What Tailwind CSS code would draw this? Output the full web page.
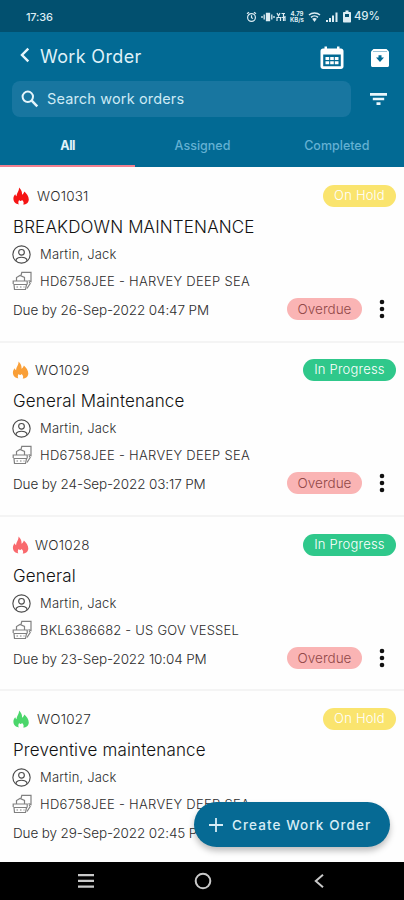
<!DOCTYPE html>
<html lang="en">
<head>
<meta charset="utf-8">
<meta name="viewport" content="width=device-width, initial-scale=1">
<title>Work Order</title>
<script src="https://cdn.jsdelivr.net/npm/@tailwindcss/browser@4"></script>
</head>
<body class="bg-white">
<svg class="hidden">
  <symbol id="flame" viewBox="0 0 16 18"><path fill="currentColor" d="M6 .4C8.400 2.800 9.400 5 9 7.800 10 7.200 10.900 6.200 11.400 4.600 13.600 6.600 15.800 9.500 15.800 12.400 15.800 15.500 13.300 17.300 10.200 17.600 11.200 15.800 10.600 14.400 9 13 8.400 14.200 7 14.400 6.200 13 5.200 14.400 5 16 5.800 17.400 2.500 17 .4 14.800.4 11.600.4 9.800 1.400 8.200 2.300 7.300 2.500 8.300 2.900 9 3.600 9.300 3.600 5.800 6.300 4 6 .4Z"/></symbol>
  <symbol id="user" viewBox="0 0 20 20"><g fill="none" stroke="#4a4a4a" stroke-width="1.200"><circle cx="10" cy="10" r="9.100"/><circle cx="10" cy="7.700" r="3"/><path d="M4.500 16.600V14.800C6.500 12.200 13.500 12.200 15.500 14.800V16.600"/></g></symbol>
  <symbol id="asset" viewBox="0 0 20 20"><g fill="none" stroke="#808080" stroke-width="1.200"><path d="M9 4.500 9.800 1.300H19V10.500L16.500 9.500"/><path d="M4.500 9.500V6.500L8 4.500 12.500 6.500V9.500M1.200 13V10H15.200V13.500M17 10.500 18.200 12.500 15 17.500"/><path d="M2 13.500H14.500L13.500 18.500H2.500Z"/><path d="M4.500 16H6M8 16H9.500M11.500 16H12.500"/></g></symbol>
  <symbol id="dots" viewBox="0 0 6 20"><g fill="#111"><circle cx="3" cy="3" r="2.300"/><circle cx="3" cy="10" r="2.300"/><circle cx="3" cy="17" r="2.300"/></g></symbol>
</svg>
<div class="relative flex h-[900px] w-[404px] flex-col overflow-hidden font-['Inter','Liberation_Sans',sans-serif]">
  <div class="flex h-8 shrink-0 items-center justify-between bg-[#02506f] pr-[25px] pl-[26px] text-[#dcecf3]">
    <span class="pt-[2px] text-[11px] font-medium tracking-[-0.2px]">17:36</span>
    <div class="flex items-center pt-[1px]">
      <svg class="h-3 w-[11px]" viewBox="0 0 11 12" fill="none" stroke="currentColor" stroke-width="1.200"><circle cx="5.500" cy="6.500" r="3.900"/><path d="M5.500 4.300V6.700L7 7.500M1 2.800 3 1.300M10 2.800 8 1.300"/></svg>
      <svg class="ml-[4px] h-3 w-[14px]" viewBox="0 0 14 12" fill="none" stroke="currentColor" stroke-width="1.300"><path d="M1 5V7M3.200 3.500V8.500M10.800 3.500V8.500M13 5V7"/><path fill="currentColor" d="M5.500 2.500H8.500V9.500H5.500Z"/></svg>
      <svg class="ml-[1px] h-3 w-[10px]" viewBox="0 0 10 12" fill="none" stroke="currentColor" stroke-width="1.200"><path d="M1 2 2.500 5 4 2M5.500 2.500H9M7.500 2V10M1 10V6.500H4.500V10M9 5V10M5.500 6.500H9"/></svg>
      <div class="ml-[3px] flex w-[16px] flex-col items-center text-[6px] leading-[6px] font-bold"><span>4.79</span><span>KB/s</span></div>
      <svg class="ml-[3px] h-3 w-[13px]" viewBox="0 0 13 12" fill="none" stroke="currentColor" stroke-width="1.500"><path d="M1 4C4 1.300 9 1.300 12 4M3 6.400C5 4.600 8 4.600 10 6.400"/><path fill="currentColor" stroke="none" d="M4.200 7.800C5.600 6.700 7.400 6.700 8.800 7.800L6.500 11Z"/></svg>
      <svg class="ml-[5px] h-3 w-[12px]" viewBox="0 0 12 12" fill="currentColor"><path d="M0 9H2V11H0ZM3 7H5V11H3ZM6 4.500H8V11H6ZM9.500 1.500H11.500V11H9.500Z"/></svg>
      <svg class="ml-[5px] h-[13px] w-[8px]" viewBox="0 0 8 13"><path fill="currentColor" d="M2.500.5H5.500V2H7C7.600 2 8 2.400 8 3V11.500C8 12.100 7.600 12.500 7 12.500H1C.4 12.500 0 12.100 0 11.500V3C0 2.400.4 2 1 2H2.500Z"/><path fill="#02506f" d="M2 4H6V7H2Z"/></svg>
      <span class="ml-[3px] w-[25px] pt-[1px] text-[11.500px] font-medium tracking-[-0.200px] whitespace-nowrap">49%</span>
    </div>
  </div>

  <header class="flex h-[135px] shrink-0 flex-col bg-[#026a94] text-white">
    <div class="flex h-[49px] items-center pr-[14px] pl-[20px]">
      <svg class="mb-[3px] h-[16px] w-[10px]" viewBox="0 0 10 16" fill="none" stroke="#e6f5fb" stroke-width="2.400"><path d="M8.300 1.700 2 8 8.300 14.300"/></svg>
      <h1 class="ml-[10px] flex-1 text-[18px] tracking-[0.350px] text-[#dff1f8]">Work Order</h1>
      <svg class="mt-[3px] h-6 w-6" viewBox="0 0 24 24"><path fill="#fff" fill-rule="evenodd" d="M4.500.5H7V2.500H17V.5H19.500V2.500H21C22.400 2.500 23.500 3.600 23.500 5V20.500C23.500 21.900 22.400 23 21 23H3C1.600 23 .5 21.900.5 20.500V5C.5 3.600 1.600 2.500 3 2.500H4.500ZM3.200 8.500V20.300H20.800V8.500Z"/><path fill="#fff" d="M5.500 11H9.200V14H5.500ZM10.200 11H13.800V14H10.200ZM14.800 11H18.500V14H14.800ZM5.500 15.200H9.200V18.200H5.500ZM10.200 15.200H13.800V18.200H10.200ZM14.800 15.200H18.500V18.200H14.800Z"/></svg>
      <svg class="mt-[2px] ml-[26px] h-[20px] w-[20px]" viewBox="0 0 20 20"><path fill="#fff" d="M3.500 1H16.500L19 3.500V17.500C19 18.400 18.400 19 17.500 19H2.500C1.600 19 1 18.400 1 17.500V3.500Z"/><path stroke="#7db2ca" stroke-width=".8" d="M3 3.500H17"/><path fill="#026a94" d="M8.500 7.300H11.500V9.500H14L10 14 6 9.500H8.500Z"/></svg>
    </div>
    <div class="flex h-[36px] items-center pr-[17px] pl-[12px]">
      <div class="flex h-9 w-[339px] items-center rounded-lg bg-[#1876a0] pl-[9px]">
        <svg class="h-[18px] w-[18px]" viewBox="0 0 18 18" fill="none" stroke="#e6f5fb" stroke-width="2"><circle cx="6.800" cy="6.800" r="5.200"/><path stroke-width="2.500" d="M10.700 10.700 16.300 16.300"/></svg>
        <span class="ml-[8px] text-[14.500px] tracking-[0.150px] text-[#cdeaf5]">Search work orders</span>
      </div>
      <svg class="ml-[19px] h-[12px] w-[17px]" viewBox="0 0 17 12" fill="#eaf6fb"><path d="M0 0H17V2.700H0ZM2.800 4.700H14.200V7.300H2.800ZM6.500 9.300H10.500V12H6.500Z"/></svg>
    </div>
    <nav class="grid flex-1 grid-cols-3 pl-[1px] text-center text-[12.500px] font-medium text-[#64b1d3]">
      <div class="-ml-[1px] flex items-center justify-center border-b-2 border-[#f0808f] pt-[10px] font-bold tracking-[-0.400px] text-[#e2f3fa]">All</div>
      <div class="flex items-center justify-center border-b-2 border-transparent pt-[10px]">Assigned</div>
      <div class="flex items-center justify-center border-b-2 border-transparent pt-[10px]">Completed</div>
    </nav>
  </header>

  <main class="flex h-[695px] shrink-0 flex-col overflow-hidden bg-[#fefefe] text-[#2c2c2c]">
    <article class="flex h-[176px] shrink-0 flex-col border-b-2 border-[#f4f4f4] pt-[17px] pr-[8px] pl-[12px]">
      <div class="flex h-[23px] items-center">
        <svg class="h-[18px] w-[18px] text-[#f51414]"><use href="#flame"/></svg>
        <span class="ml-[7px] flex-1 pt-[1px] text-[13.500px] font-light tracking-[0.200px]">WO1031</span>
        <span class="flex h-[22px] w-[73px] items-center justify-center rounded-full bg-[#fae46e] pt-[1px] text-[13px] font-light tracking-[0.200px] text-white">On Hold</span>
      </div>
      <h2 class="mt-[8px] ml-[1px] h-[24px] text-[17px] leading-[24px] font-light tracking-[0.150px] text-[#111]">BREAKDOWN MAINTENANCE</h2>
      <div class="mt-[3px] flex h-[24px] items-center"><svg class="h-[19px] w-[19px]"><use href="#user"/></svg><span class="ml-[9px] pt-[2px] text-[13px] font-light tracking-[0.200px]">Martin, Jack</span></div>
      <div class="mt-[3px] flex h-[24px] items-center"><svg class="h-[20px] w-[20px]"><use href="#asset"/></svg><span class="ml-[8px] pt-[2px] text-[13px] font-light tracking-[0.290px]">HD6758JEE - HARVEY DEEP SEA</span></div>
      <div class="mt-[4px] flex h-[24px] items-center"><span class="ml-[1px] flex-1 pt-[2px] text-[13.500px] font-light tracking-[-0.120px]">Due by 26-Sep-2022 04:47 PM</span><span class="flex h-[22px] w-[75px] items-center justify-center rounded-full bg-[#fab4b4] text-[13.500px] font-light text-[#914848]">Overdue</span><svg class="mr-[11px] ml-[17px] h-[20px] w-[6px]"><use href="#dots"/></svg></div>
    </article>
    <article class="flex h-[174px] shrink-0 flex-col border-b-2 border-[#f4f4f4] pt-[15px] pr-[8px] pl-[12px]">
      <div class="flex h-[23px] items-center">
        <svg class="h-[18px] w-[17px] text-[#f99f38]"><use href="#flame"/></svg>
        <span class="ml-[6px] flex-1 pt-[1px] text-[13.500px] font-light tracking-[0.200px]">WO1029</span>
        <span class="flex h-[22px] w-[93px] items-center justify-center rounded-full bg-[#2fc88b] pt-[1px] text-[13px] font-light tracking-[0.200px] text-white">In Progress</span>
      </div>
      <h2 class="mt-[8px] ml-[1px] h-[24px] text-[17px] leading-[24px] font-light tracking-[0.150px] text-[#111]">General Maintenance</h2>
      <div class="mt-[3px] flex h-[24px] items-center"><svg class="h-[19px] w-[19px]"><use href="#user"/></svg><span class="ml-[9px] pt-[2px] text-[13px] font-light tracking-[0.200px]">Martin, Jack</span></div>
      <div class="mt-[3px] flex h-[24px] items-center"><svg class="h-[20px] w-[20px]"><use href="#asset"/></svg><span class="ml-[8px] pt-[2px] text-[13px] font-light tracking-[0.290px]">HD6758JEE - HARVEY DEEP SEA</span></div>
      <div class="mt-[4px] flex h-[24px] items-center"><span class="ml-[1px] flex-1 pt-[2px] text-[13.500px] font-light tracking-[-0.120px]">Due by 24-Sep-2022 03:17 PM</span><span class="flex h-[22px] w-[75px] items-center justify-center rounded-full bg-[#fab4b4] text-[13.500px] font-light text-[#914848]">Overdue</span><svg class="mr-[11px] ml-[17px] h-[20px] w-[6px]"><use href="#dots"/></svg></div>
    </article>
    <article class="flex h-[174px] shrink-0 flex-col border-b-2 border-[#f4f4f4] pt-[16px] pr-[8px] pl-[12px]">
      <div class="flex h-[23px] items-center">
        <svg class="h-[18px] w-[17px] text-[#f9696d]"><use href="#flame"/></svg>
        <span class="ml-[6px] flex-1 pt-[1px] text-[13.500px] font-light tracking-[0.200px]">WO1028</span>
        <span class="flex h-[22px] w-[93px] items-center justify-center rounded-full bg-[#2fc88b] pt-[1px] text-[13px] font-light tracking-[0.200px] text-white">In Progress</span>
      </div>
      <h2 class="mt-[8px] ml-[1px] h-[24px] text-[17px] leading-[24px] font-light tracking-[0.150px] text-[#111]">General</h2>
      <div class="mt-[3px] flex h-[24px] items-center"><svg class="h-[19px] w-[19px]"><use href="#user"/></svg><span class="ml-[9px] pt-[2px] text-[13px] font-light tracking-[0.200px]">Martin, Jack</span></div>
      <div class="mt-[3px] flex h-[24px] items-center"><svg class="h-[20px] w-[20px]"><use href="#asset"/></svg><span class="ml-[8px] pt-[2px] text-[13px] font-light tracking-[0.210px]">BKL6386682 - US GOV VESSEL</span></div>
      <div class="mt-[4px] flex h-[24px] items-center"><span class="ml-[1px] flex-1 pt-[2px] text-[13.500px] font-light tracking-[-0.120px]">Due by 23-Sep-2022 10:04 PM</span><span class="flex h-[22px] w-[75px] items-center justify-center rounded-full bg-[#fab4b4] text-[13.500px] font-light text-[#914848]">Overdue</span><svg class="mr-[11px] ml-[17px] h-[20px] w-[6px]"><use href="#dots"/></svg></div>
    </article>
    <article class="flex h-[174px] shrink-0 flex-col pt-[16px] pr-[8px] pl-[12px]">
      <div class="flex h-[23px] items-center">
        <svg class="h-[18px] w-[18px] text-[#4bd66b]"><use href="#flame"/></svg>
        <span class="ml-[7px] flex-1 pt-[1px] text-[13.500px] font-light tracking-[0.200px]">WO1027</span>
        <span class="flex h-[22px] w-[73px] items-center justify-center rounded-full bg-[#fae46e] pt-[1px] text-[13px] font-light tracking-[0.200px] text-white">On Hold</span>
      </div>
      <h2 class="mt-[8px] ml-[1px] h-[24px] text-[17px] leading-[24px] font-light tracking-[0.150px] text-[#111]">Preventive maintenance</h2>
      <div class="mt-[3px] flex h-[24px] items-center"><svg class="h-[19px] w-[19px]"><use href="#user"/></svg><span class="ml-[9px] pt-[2px] text-[13px] font-light tracking-[0.200px]">Martin, Jack</span></div>
      <div class="mt-[3px] flex h-[24px] items-center"><svg class="h-[20px] w-[20px]"><use href="#asset"/></svg><span class="ml-[8px] pt-[2px] text-[13px] font-light tracking-[0.290px]">HD6758JEE - HARVEY DEEP SEA</span></div>
      <div class="mt-[4px] flex h-[24px] items-center"><span class="ml-[1px] pt-[2px] text-[13.500px] font-light tracking-[-0.120px]">Due by 29-Sep-2022 02:45 PM</span></div>
    </article>
  </main>

  <footer class="flex h-[38px] shrink-0 items-center bg-black pr-[78px] pl-[78px]">
    <svg class="h-[14px] w-[16px]" viewBox="0 0 16 14" fill="#c9c9c9"><path d="M0 0H16V2.200H0ZM0 5.800H16V8H0ZM0 11.600H16V13.800H0Z"/></svg>
    <svg class="ml-[100px] h-[18px] w-[18px]" viewBox="0 0 18 18" fill="none" stroke="#c9c9c9" stroke-width="2"><circle cx="9" cy="9" r="7.300"/></svg>
    <svg class="ml-[102px] h-[14px] w-[10px]" viewBox="0 0 10 14" fill="none" stroke="#c9c9c9" stroke-width="2"><path d="M9 .8 1.800 7 9 13.200"/></svg>
  </footer>

  <button class="absolute top-[802px] left-[194px] flex h-[45px] w-[196px] items-center rounded-full bg-[#066a94] pl-[15px] text-[#d7edf6] shadow-[0_4px_6px_rgba(0,0,0,0.25)]">
    <svg class="h-[14px] w-[14px]" viewBox="0 0 14 14" stroke="currentColor" stroke-width="1.800"><path d="M7 0V14M0 7H14"/></svg>
    <span class="ml-[9px] pt-[2px] text-[13.500px] font-medium tracking-[1.080px] whitespace-nowrap">Create Work Order</span>
  </button>
</div>
</body>
</html>
